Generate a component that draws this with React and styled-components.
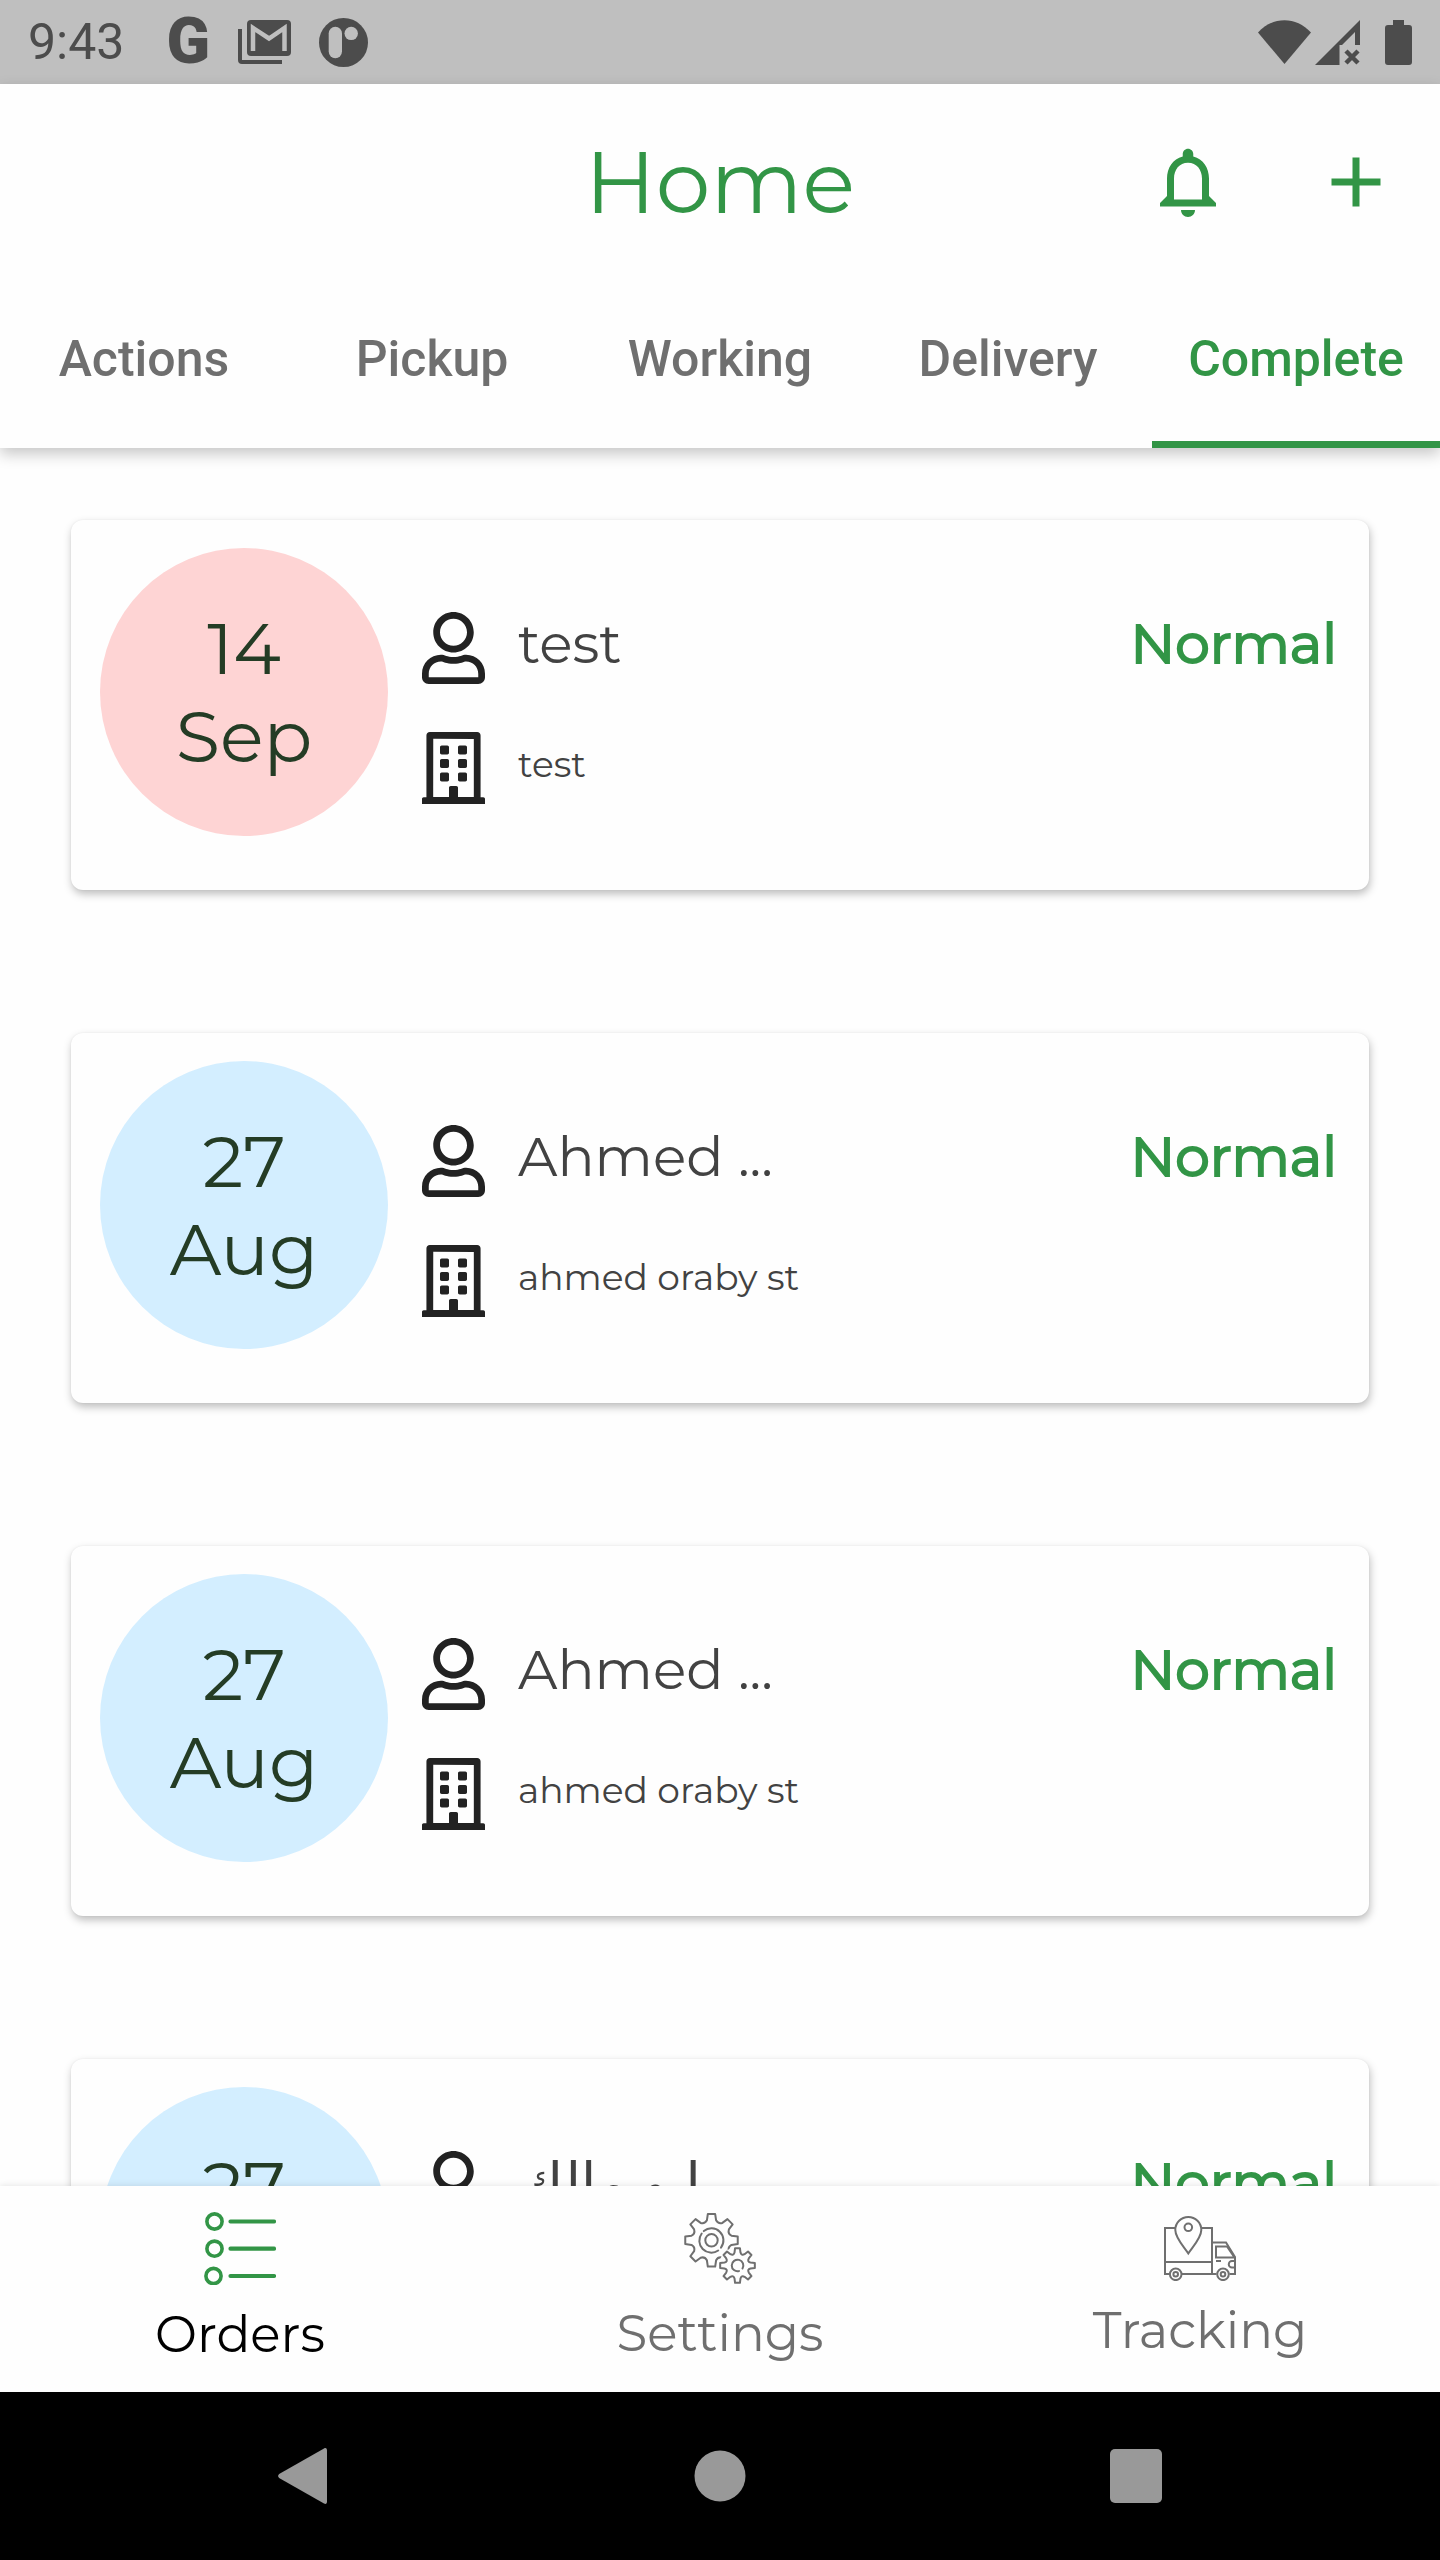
import React from "react";
import styled, { createGlobalStyle } from "styled-components";
import { MdAdd, MdNotificationsNone } from "react-icons/md";
import { FaRegBuilding, FaRegUser } from "react-icons/fa";

const green = "#329546";
const grey = "#6f6f6f";
const paper = "#fefefe";
const statusInk = "#4c4c4c";
const statusBg = "#bfbfbf";

const GlobalStyle = createGlobalStyle`
  *, *::before, *::after { box-sizing: border-box; }
  body {
    margin: 0;
    background: ${paper};
    font-family: Montserrat, Inter, "DejaVu Sans", sans-serif;
  }
  button { border: 0; padding: 0; background: none; font: inherit; color: inherit; cursor: pointer; }
  svg { display: block; flex: none; }
`;

const Screen = styled.div`
  display: flex;
  flex-direction: column;
  height: 100vh;
  overflow: hidden;
`;

const StatusBar = styled.div`
  display: flex;
  align-items: center;
  justify-content: space-between;
  height: 84px;
  padding: 0 28px;
  flex: none;
  background: ${statusBg};
  color: ${statusInk};
  font-family: Roboto, sans-serif;
`;

const StatusGroup = styled.div`
  display: flex;
  align-items: center;
  gap: ${(p) => p.$gap}px;
`;

const Clock = styled.time`
  font-size: 50px;
  line-height: 60px;
  margin-right: 14px;
`;

const GoogleMark = styled.span`
  font-size: 64px;
  font-weight: 900;
  line-height: 84px;
`;

const Top = styled.header`
  position: relative;
  z-index: 1;
  flex: none;
  background: ${paper};
  box-shadow: 0 6px 14px rgba(0, 0, 0, 0.22);
`;

const TitleBar = styled.div`
  display: grid;
  grid-template-columns: 1fr auto 1fr;
  align-items: center;
  height: 196px;
  padding: 0 42px;
  color: ${green};
`;

const Title = styled.h1`
  grid-column: 2;
  margin: 0;
  font-size: 87px;
  font-weight: 400;
  line-height: 108px;
`;

const TitleActions = styled.div`
  display: flex;
  justify-content: flex-end;
  gap: 84px;
`;

const Tabs = styled.div`
  display: grid;
  grid-template-columns: repeat(5, 1fr);
  height: 168px;
`;

const Tab = styled.button`
  && {
    padding-bottom: 4px;
    border-bottom: 7px solid ${(p) => (p.$active ? green : "transparent")};
    color: ${(p) => (p.$active ? green : grey)};
    font-family: Roboto, sans-serif;
    font-size: 50px;
    font-weight: 500;
    line-height: 58px;
  }
`;

const List = styled.main`
  display: flex;
  flex-direction: column;
  gap: 143px;
  flex: 1;
  min-height: 0;
  overflow: hidden;
  padding: 72px 71px 0;
`;

const Card = styled.article`
  display: flex;
  align-items: flex-start;
  gap: 34px;
  flex: none;
  padding: 28px 32px 54px 29px;
  border-radius: 12px;
  background: ${paper};
  box-shadow: 1px 4px 8px rgba(0, 0, 0, 0.26), 0 0 2px rgba(0, 0, 0, 0.06);
`;

const DateBadge = styled.div`
  display: flex;
  flex-direction: column;
  align-items: center;
  justify-content: center;
  flex: none;
  width: 288px;
  height: 288px;
  border-radius: 50%;
  background: ${(p) => (p.$late ? "#fed4d4" : "#d3eeff")};
  color: #243c25;
  font-size: 72px;
  line-height: 88px;
`;

const Details = styled.div`
  display: flex;
  flex-direction: column;
  gap: 48px;
  flex: 1;
  min-width: 0;
  padding-top: 64px;
`;

const Row = styled.div`
  display: flex;
  align-items: flex-start;
  gap: 33px;
  height: 72px;
  color: #222;

  svg {
    width: 63px;
    height: 72px;
  }
`;

const Name = styled.h2`
  flex: 1;
  margin: 0;
  color: #424242;
  font-size: 55px;
  font-weight: 400;
  line-height: 64px;
`;

const Address = styled.p`
  margin: 0;
  color: #424242;
  font-size: 36px;
  line-height: 64px;
`;

const Priority = styled.strong`
  color: ${green};
  font-size: 55px;
  font-weight: 400;
  line-height: 64px;
  -webkit-text-stroke: 2px ${green};
`;

const BottomNav = styled.nav`
  position: relative;
  z-index: 1;
  display: grid;
  grid-template-columns: repeat(3, 1fr);
  height: 206px;
  flex: none;
  background: ${paper};
  box-shadow: 0 0 7px rgba(0, 0, 0, 0.12);
`;

const NavLink = styled.a`
  display: flex;
  flex-direction: column;
  align-items: center;
  justify-content: center;
  gap: 18px;
  color: ${(p) => (p.$active ? "#000" : grey)};
  font-size: 50px;
  line-height: 64px;
  text-decoration: none;
`;

const SystemBar = styled.div`
  display: flex;
  align-items: center;
  justify-content: center;
  gap: 364px;
  height: 168px;
  flex: none;
  background: #000;
  color: #999;
`;

const MailIcon = () => (
  <svg width="53" height="44" viewBox="0 0 53 44" aria-hidden="true">
    <path d="M0 9h4v31h40v4H4a4 4 0 0 1-4-4z" fill="currentColor" />
    <rect x="9" width="44" height="36" rx="4" fill="currentColor" />
    <path d="M15 31V8l16 10.500L46.500 8v23" fill="none" stroke={statusBg} strokeWidth="4.500" />
  </svg>
);

const AppDotIcon = () => (
  <svg width="49" height="49" viewBox="0 0 49 49" aria-hidden="true">
    <circle cx="24.500" cy="24.500" r="24.500" fill="currentColor" />
    <rect x="9.700" y="8.700" width="13.300" height="31.500" rx="6.600" fill={statusBg} />
    <circle cx="32.200" cy="15.400" r="6.700" fill={statusBg} />
  </svg>
);

const WifiIcon = () => (
  <svg width="53" height="45" viewBox="0 0 53 45" aria-hidden="true">
    <path d="M26.500 44 0 12.500C15-4 38-4 53 12.500z" fill="currentColor" />
  </svg>
);

const SignalIcon = () => (
  <svg width="45" height="45" viewBox="0 0 45 45" aria-hidden="true">
    <path d="M0 45 45 0v25h-5V12L27 25h-2.500v20z" fill="currentColor" />
    <path d="m31 31 12 12m0-12L31 43" stroke="currentColor" strokeWidth="4.500" />
  </svg>
);

const BatteryIcon = () => (
  <svg width="27" height="45" viewBox="0 0 27 45" aria-hidden="true">
    <path d="M8 0h11v5h5a3 3 0 0 1 3 3v34a3 3 0 0 1-3 3H3a3 3 0 0 1-3-3V8a3 3 0 0 1 3-3h5z" fill="currentColor" />
  </svg>
);

const OrdersIcon = () => (
  <svg width="72" height="73" viewBox="0 0 72 73" fill="none" stroke={green} aria-hidden="true">
    <g strokeWidth="3.600">
      <circle cx="10.500" cy="9.500" r="7.600" />
      <circle cx="10.500" cy="36.700" r="7.600" />
      <circle cx="9.500" cy="64" r="7.600" />
    </g>
    <path d="M26.500 9.500H70M26.500 36.700H70M26.500 64H70" strokeWidth="4.200" strokeLinecap="round" />
  </svg>
);

// Eight-toothed cog outline: flat tooth tips joined by rounded valleys.
const cog = (cx, cy, tip, root) => {
  const at = (r, deg) => {
    const a = (deg * Math.PI) / 180;
    return `${(cx + r * Math.cos(a)).toFixed(2)} ${(cy + r * Math.sin(a)).toFixed(2)}`;
  };
  let d = "";
  for (let k = 0; k < 8; k += 1) {
    const a = k * 45;
    d += `${k ? "L" : "M"}${at(root + 1, a - 13)}L${at(tip, a - 8)}L${at(tip, a + 8)}L${at(root + 1, a + 13)}`;
    d += `Q${at(root - 2, a + 22.5)} ${at(root + 1, a + 32)}`;
  }
  return `${d}Z`;
};

const SettingsIcon = () => (
  <svg
    width="72"
    height="71"
    viewBox="0 0 72 71"
    fill="none"
    stroke="currentColor"
    strokeWidth="2"
    strokeLinejoin="round"
    strokeLinecap="round"
    aria-hidden="true"
  >
    <path d={cog(27.5, 27.3, 26.5, 19.5)} />
    <path d="M17.700 20.500a12 12 0 0 0 16.500 17M19.800 18.100a12 12 0 0 1 17.200 16.500" />
    <circle cx="27.500" cy="27.300" r="6.200" />
    <circle cx="53.500" cy="52.500" r="18.500" fill={paper} stroke="none" />
    <path d={cog(53.5, 52.5, 17.5, 12.3)} fill={paper} />
    <path d="M58.500 55.500a5.800 5.800 0 1 0-3.500 2.600" />
  </svg>
);

const TrackingIcon = () => (
  <svg width="72" height="65" viewBox="0 0 72 65" fill="none" stroke="currentColor" strokeWidth="2" aria-hidden="true">
    <path d="M11 12H1v46h4.500M37 12h11v46M1 46h47M18 58h34.500M48 26.500h14L71 41v17h-5.500" />
    <path d="M24.300 37.500C20 31 11.300 22 11.300 14a13 13 0 0 1 26 0c0 8-8.700 17-13 23.500z" />
    <circle cx="24.300" cy="11.300" r="3.800" />
    <path d="M52 30.500h11l7.500 11H52zM52 45h5M71 45h-3a3 3 0 0 0 0 6.500h3" />
    <circle cx="11.700" cy="58.300" r="5.800" />
    <circle cx="11.700" cy="58.300" r="2.300" />
    <circle cx="59" cy="58.300" r="5.800" />
    <circle cx="59" cy="58.300" r="2.300" />
  </svg>
);

const tabs = ["Actions", "Pickup", "Working", "Delivery", "Complete"];

const orders = [
  { id: 1, day: "14", month: "Sep", late: true, name: "test", address: "test" },
  { id: 2, day: "27", month: "Aug", name: "Ahmed ...", address: "ahmed oraby st" },
  { id: 3, day: "27", month: "Aug", name: "Ahmed ...", address: "ahmed oraby st" },
  { id: 4, day: "27", month: "Aug", name: "ابو مالك" },
];

const OrderCard = ({ order }) => (
  <Card>
    <DateBadge $late={order.late}>
      <span>{order.day}</span>
      <span>{order.month}</span>
    </DateBadge>
    <Details>
      <Row>
        <FaRegUser />
        <Name>{order.name}</Name>
        <Priority>Normal</Priority>
      </Row>
      {order.address && (
        <Row>
          <FaRegBuilding />
          <Address>{order.address}</Address>
        </Row>
      )}
    </Details>
  </Card>
);

export default function App() {
  return (
    <Screen>
      <GlobalStyle />
      <StatusBar>
        <StatusGroup $gap={28}>
          <Clock>9:43</Clock>
          <GoogleMark>G</GoogleMark>
          <MailIcon />
          <AppDotIcon />
        </StatusGroup>
        <StatusGroup $gap={25}>
          <StatusGroup $gap={4}>
            <WifiIcon />
            <SignalIcon />
          </StatusGroup>
          <BatteryIcon />
        </StatusGroup>
      </StatusBar>

      <Top>
        <TitleBar>
          <Title>Home</Title>
          <TitleActions>
            <button type="button" aria-label="Notifications">
              <MdNotificationsNone size={84} />
            </button>
            <button type="button" aria-label="Add order">
              <MdAdd size={84} />
            </button>
          </TitleActions>
        </TitleBar>
        <Tabs role="tablist">
          {tabs.map((label) => (
            <Tab key={label} type="button" role="tab" aria-selected={label === "Complete"} $active={label === "Complete"}>
              {label}
            </Tab>
          ))}
        </Tabs>
      </Top>

      <List>
        {orders.map((order) => (
          <OrderCard key={order.id} order={order} />
        ))}
      </List>

      <BottomNav>
        <NavLink href="#orders" $active>
          <OrdersIcon />
          Orders
        </NavLink>
        <NavLink href="#settings">
          <SettingsIcon />
          Settings
        </NavLink>
        <NavLink href="#tracking">
          <TrackingIcon />
          Tracking
        </NavLink>
      </BottomNav>

      <SystemBar>
        <button type="button" aria-label="Back">
          <svg width="52" height="56" viewBox="0 0 52 56">
            <path d="M46 .5c2-1 3 0 3 2v51c0 2-1 3-3 2L2 30.500c-2.500-1.500-2.500-3.500 0-5z" fill="currentColor" />
          </svg>
        </button>
        <button type="button" aria-label="Home screen">
          <svg width="52" height="52" viewBox="0 0 52 52">
            <circle cx="26" cy="26" r="25.500" fill="currentColor" />
          </svg>
        </button>
        <button type="button" aria-label="Recent apps">
          <svg width="52" height="54" viewBox="0 0 52 54">
            <rect width="52" height="54" rx="5" fill="currentColor" />
          </svg>
        </button>
      </SystemBar>
    </Screen>
  );
}
